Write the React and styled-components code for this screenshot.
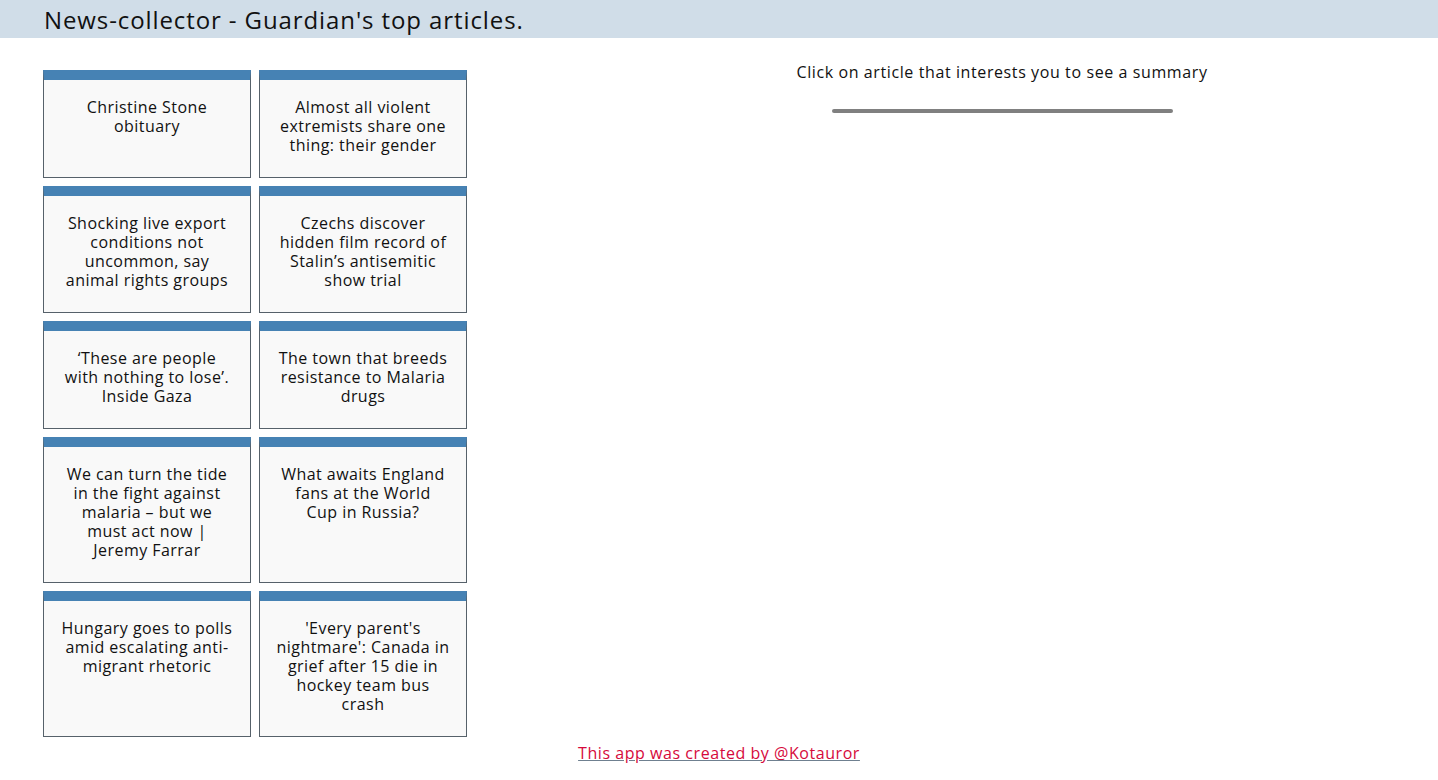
import React from "react";
import styled, { createGlobalStyle } from "styled-components";

const GlobalStyle = createGlobalStyle`
  body {
    margin: 0;
    background: #ffffff;
    font-family: "Open Sans", "Noto Sans", sans-serif;
    color: #111;
  }
`;

const articles = [
  "Christine Stone obituary",
  "Almost all violent extremists share one thing: their gender",
  "Shocking live export conditions not uncommon, say animal rights groups",
  "Czechs discover hidden film record of Stalin’s antisemitic show trial",
  "‘These are people with nothing to lose’. Inside Gaza",
  "The town that breeds resistance to Malaria drugs",
  "We can turn the tide in the fight against malaria – but we must act now | Jeremy Farrar",
  "What awaits England fans at the World Cup\u00a0in Russia?",
  "Hungary goes to polls amid escalating anti-migrant rhetoric",
  "'Every parent's nightmare': Canada in grief after 15 die in hockey team bus crash",
];

const St = {
  Header: styled.header`
    height: 38px;
    background-color: #d0dde8;
    display: flex;
    align-items: center;
    padding-left: 44px;
  `,
  Title: styled.h1`
    margin: 0;
    font-size: 24px;
    font-weight: 400;
    letter-spacing: 0.9px;
  `,
  Main: styled.main`
    display: flex;
    align-items: flex-start;
    padding: 32px 0 0 43px;
  `,
  Grid: styled.ul`
    list-style: none;
    margin: 0;
    padding: 0;
    width: 424px;
    display: grid;
    grid-template-columns: 208px 208px;
    gap: 8px;
  `,
  Card: styled.li`
    background-color: #f9f9f9;
    border: 1px solid #56616a;
    border-top: 10px solid #4682b4;
    padding: 18px 16px 22px;
    text-align: center;
    font-size: 16px;
    line-height: 19px;
    letter-spacing: 0.45px;
    cursor: pointer;
  `,
  Summary: styled.section`
    flex: 1;
    padding-left: 99px;
    display: flex;
    flex-direction: column;
    align-items: center;
  `,
  Hint: styled.p`
    margin: -7px 0 0;
    font-size: 16px;
    line-height: 19px;
    letter-spacing: 0.6px;
  `,
  Rule: styled.div`
    width: 341px;
    height: 4px;
    border-radius: 2px;
    background-color: #808080;
    margin-top: 27px;
  `,
  Footer: styled.footer`
    text-align: center;
    padding-top: 5px;
  `,
  Link: styled.a`
    color: #d6093b;
    text-decoration: underline;
    text-decoration-color: #6f8090;
    font-size: 16px;
    line-height: 19px;
    letter-spacing: 0.55px;
  `,
};

const App = () => {
  return (
    <>
      <GlobalStyle />
      <St.Header>
        <St.Title>News-collector - Guardian's top articles.</St.Title>
      </St.Header>
      <St.Main>
        <St.Grid>
          {articles.map((title) => (
            <St.Card key={title}>{title}</St.Card>
          ))}
        </St.Grid>
        <St.Summary>
          <St.Hint>Click on article that interests you to see a summary</St.Hint>
          <St.Rule />
        </St.Summary>
      </St.Main>
      <St.Footer>
        <St.Link href="#">This app was created by @Kotauror</St.Link>
      </St.Footer>
    </>
  );
};

export default App;
